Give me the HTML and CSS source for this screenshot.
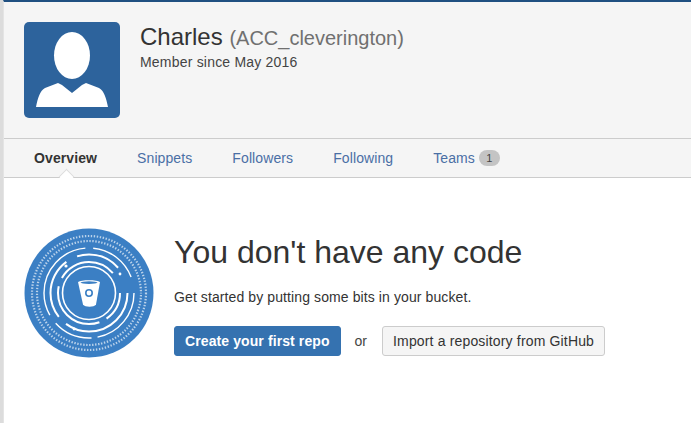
FILE: index.html
```html
<!DOCTYPE html>
<html lang="en">
<head>
    <meta charset="UTF-8">
    <title>Charles (ACC_cleverington)</title>
    <link rel="stylesheet" href="styles.css">
</head>
<body>
<div class="page">
    <header class="profile">
        <svg class="avatar" width="96" height="96" viewBox="0 0 96 96">
            <rect width="96" height="96" rx="5" fill="#2d639c"/>
            <ellipse cx="48" cy="33.5" rx="18" ry="23.5" fill="#fff"/>
            <path d="M12 85 C14 75 16 69 21 66 L34 61 L38 63 L48 71 L58 63 L62 61 L75 66 C80 69 82 75 84 85 Z" fill="#fff"/>
        </svg>
        <div class="profile-text">
            <h1 class="name">Charles <span class="username">(ACC_cleverington)</span></h1>
            <p class="since">Member since May 2016</p>
        </div>
    </header>

    <nav class="tabs">
        <a class="tab active">Overview</a>
        <a class="tab">Snippets</a>
        <a class="tab">Followers</a>
        <a class="tab">Following</a>
        <a class="tab tab-count">Teams <span class="badge">1</span></a>
    </nav>

    <main class="empty">
        <svg class="logo" width="130" height="130" viewBox="0 0 130 130">
            <circle cx="65" cy="65" r="64.5" fill="#3b7fc4"/>
            <g fill="none" stroke="#fff">
                <!-- binary rings -->
                <circle cx="65" cy="65" r="57" stroke-width="2.2" stroke-dasharray="1.4 1.6" opacity=".65"/>
                <circle cx="65" cy="65" r="52" stroke-width="2.2" stroke-dasharray="1.4 1.6" stroke-dashoffset="1" opacity=".65"/>
                <!-- broken circuit rings -->
                <circle cx="65" cy="65" r="45" stroke-width="1.4" stroke-dasharray="62 6 40 10 90 8 50 17"/>
                <circle cx="65" cy="65" r="38.5" stroke-width="2" stroke-dasharray="85 10 62 12 45 28"/>
                <circle cx="65" cy="65" r="31" stroke-width="2" stroke-dasharray="30 8 66 9 60 22"/>
                <circle cx="65" cy="65" r="26.5" stroke-width="1.6"/>
                <!-- circuit nodes -->
                <circle cx="42" cy="38" r="1.6" fill="#fff" stroke="none"/>
                <circle cx="96" cy="46" r="1.4" fill="#fff" stroke="none"/>
                <circle cx="50" cy="101" r="1.4" fill="#fff" stroke="none"/>
            </g>
            <path d="M54 54 C57 51.5 73 51.5 76 54 L72 76.5 C70 79.5 61 79.5 59 76.5 Z" fill="#fff"/>
            <ellipse cx="65" cy="54.6" rx="8.5" ry="1.3" fill="#3b7fc4"/>
            <circle cx="65" cy="65" r="3.2" fill="none" stroke="#3b7fc4" stroke-width="1.6"/>
        </svg>
        <div class="empty-body">
            <h2 class="empty-title">You don't have any code</h2>
            <p class="empty-text">Get started by putting some bits in your bucket.</p>
            <div class="actions">
                <a class="btn btn-primary">Create your first repo</a>
                <span class="or">or</span>
                <a class="btn">Import a repository from GitHub</a>
            </div>
        </div>
    </main>
</div>
</body>
</html>
```

FILE: styles.css
```css
* {
    box-sizing: border-box;
}
html, body {
    margin: 0;
    padding: 0;
    height: 100%;
    background-color: #fff;
    font-family: 'Liberation Sans', Arial, sans-serif;
    color: #333;
    overflow: hidden;
}
.page {
    height: 100%;
    margin-left: 3px;
    border-left: 1px solid #e4e4e4;
    border-top: 2px solid #205081;
    box-shadow: -3px 0 0 #dcdcdc;
}
.profile {
    display: flex;
    height: 137px;
    padding: 20px 0 0 20px;
    gap: 20px;
    background-color: #f5f5f5;
    border-bottom: 1px solid #ccc;
}
.avatar {
    flex: none;
}
.name {
    margin: 0;
    font-size: 24px;
    font-weight: normal;
    line-height: 30px;
}
.username {
    font-size: 20px;
    color: #707070;
}
.since {
    margin: -1px 0 0;
    font-size: 14px;
    line-height: 20px;
    letter-spacing: .2px;
    color: #444;
}
.tabs {
    position: relative;
    display: flex;
    align-items: center;
    height: 39px;
    padding-left: 30px;
    gap: 40px;
    background-color: #f5f5f5;
    border-bottom: 1px solid #ccc;
    font-size: 14px;
    letter-spacing: .1px;
}
.tab {
    color: #4a6fa5;
}
.tab.active {
    position: relative;
    align-self: stretch;
    line-height: 38px;
    font-weight: bold;
    color: #333;
}
.tab.active::after {
    content: "";
    position: absolute;
    left: 50%;
    bottom: -5px;
    width: 10px;
    height: 10px;
    margin-left: -5px;
    background-color: #fff;
    border-top: 1px solid #ddd;
    border-left: 1px solid #ddd;
    transform: rotate(45deg);
}
.tab-count {
    display: flex;
    align-items: center;
    gap: 4px;
}
.badge {
    width: 21px;
    height: 16px;
    border-radius: 8px;
    background-color: #c4c4c4;
    font-size: 11px;
    line-height: 16px;
    text-align: center;
    color: #444;
}
.empty {
    display: flex;
    padding: 50px 0 0 20px;
    gap: 20px;
}
.logo {
    flex: none;
}
.empty-body {
    padding-top: 5px;
}
.empty-title {
    margin: 0;
    font-size: 32px;
    font-weight: normal;
    line-height: 38px;
}
.empty-text {
    margin: 17px 0 0;
    font-size: 14px;
    line-height: 18px;
    letter-spacing: .1px;
    color: #333;
}
.actions {
    display: flex;
    align-items: center;
    margin-top: 20px;
    font-size: 14px;
}
.or {
    margin: 0 15px 0 14px;
    color: #444;
}
.btn {
    height: 30px;
    padding: 0 10px;
    line-height: 28px;
    border: 1px solid #ccc;
    border-radius: 3px;
    background-color: #f5f5f5;
    color: #333;
    letter-spacing: .16px;
}
.btn-primary {
    padding: 0 10px;
    border-color: #3572b0;
    background-color: #3572b0;
    font-weight: bold;
    color: #fff;
    letter-spacing: .1px;
}
```
